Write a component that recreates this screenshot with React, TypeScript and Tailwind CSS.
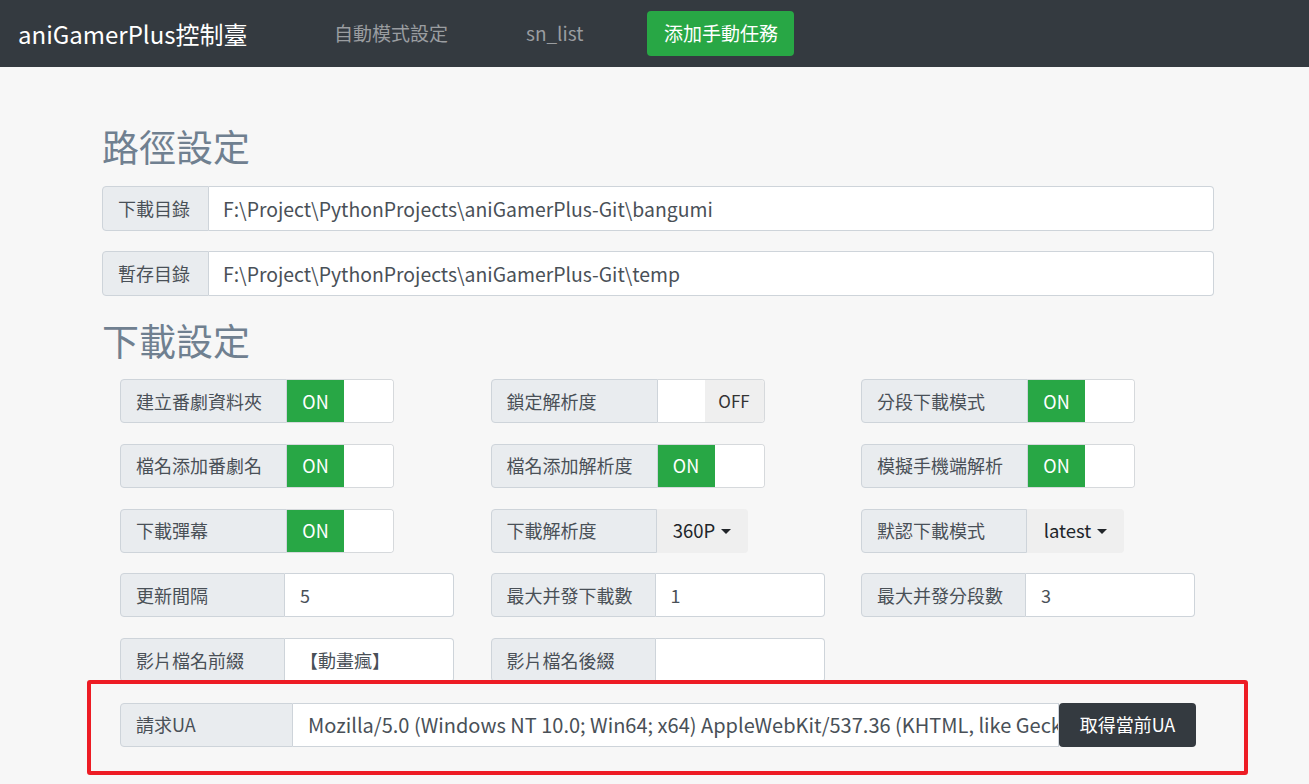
import React from "react";

const FONT = "font-['Noto_Sans_CJK_TC','Noto_Sans',sans-serif]";

function Label({ text, w }: { text: string; w: number }) {
  return (
    <div
      className="flex h-full items-center border border-[#ced4da] bg-[#e9ecef] pl-[15px] text-[18px] text-[#495057] rounded-l-[4px] shrink-0"
      style={{ width: w }}
    >
      {text}
    </div>
  );
}

function Toggle({ label, on }: { label: string; on: boolean }) {
  return (
    <div className="flex h-[44px] w-[274px]">
      <Label text={label} w={167} />
      <div className="flex h-full w-[107px] overflow-hidden border border-l-0 border-[#d6d9dc] rounded-r-[4px] bg-white">
        {on ? (
          <>
            <div className="flex w-[57px] items-center justify-center bg-[#28a745] text-[18px] text-white">ON</div>
            <div className="flex-1 bg-white" />
          </>
        ) : (
          <>
            <div className="w-[47px] bg-white" />
            <div className="flex flex-1 items-center justify-center bg-[#efefef] text-[17px] text-[#333]">OFF</div>
          </>
        )}
      </div>
    </div>
  );
}

function Dropdown({ label, value, w }: { label: string; value: string; w: number }) {
  return (
    <div className="flex h-[44px]">
      <Label text={label} w={166} />
      <div
        className="flex h-full items-center justify-center gap-[6px] bg-[#efefef] text-[18.5px] text-[#212529] rounded-r-[4px]"
        style={{ width: w }}
      >
        {value}
        <span className="mt-[1px] inline-block h-0 w-0 border-x-[5px] border-t-[5px] border-x-transparent border-t-[#212529]" />
      </div>
    </div>
  );
}

function TextField({ label, value }: { label: string; value: string }) {
  return (
    <div className="flex h-[44px] w-[334px]">
      <Label text={label} w={165} />
      <div className="flex h-full flex-1 items-center border border-l-0 border-[#ced4da] bg-white pl-[15px] text-[18px] text-[#495057] rounded-r-[4px]">
        {value}
      </div>
    </div>
  );
}

function PathField({ label, value }: { label: string; value: string }) {
  return (
    <div className="flex h-[45px] w-full">
      <Label text={label} w={107} />
      <div className="flex h-full flex-1 items-center border border-l-0 border-[#ced4da] bg-white pl-[14px] text-[19.4px] text-[#495057] rounded-r-[4px]">
        {value}
      </div>
    </div>
  );
}

export default function App() {
  return (
    <div className={`min-h-screen bg-[#f7f7f7] ${FONT}`}>
      <nav className="flex h-[67px] items-center bg-[#343a40] pl-[18px]">
        <span className="w-[230px] whitespace-nowrap text-[24px] text-white">aniGamerPlus控制臺</span>
        <span className="ml-[86px] text-[19px] text-[#9a9da0]">自動模式設定</span>
        <span className="ml-[78px] text-[19px] text-[#9a9da0]">sn_list</span>
        <button className="ml-[64px] h-[45px] w-[147px] rounded-[4px] bg-[#28a745] text-[19px] text-white">添加手動任務</button>
      </nav>

      <main className="relative mx-[102px] w-[1112px] pt-[57px]">
        <h2 className="mb-[18px] text-[37px] leading-[44px] text-[#708090]">路徑設定</h2>
        <div className="flex flex-col gap-[20px]">
          <PathField label="下載目錄" value="F:\Project\PythonProjects\aniGamerPlus-Git\bangumi" />
          <PathField label="暫存目錄" value="F:\Project\PythonProjects\aniGamerPlus-Git\temp" />
        </div>

        <h2 className="mb-[17px] mt-[22px] text-[37px] leading-[44px] text-[#708090]">下載設定</h2>

        <div className="grid grid-cols-[370.5px_370.5px_1fr] gap-y-[20.8px] pl-[18px]">
          <Toggle label="建立番劇資料夾" on />
          <Toggle label="鎖定解析度" on={false} />
          <Toggle label="分段下載模式" on />

          <Toggle label="檔名添加番劇名" on />
          <Toggle label="檔名添加解析度" on />
          <Toggle label="模擬手機端解析" on />

          <Toggle label="下載彈幕" on />
          <Dropdown label="下載解析度" value="360P" w={91} />
          <Dropdown label="默認下載模式" value="latest" w={97} />

          <TextField label="更新間隔" value="5" />
          <TextField label="最大并發下載數" value="1" />
          <TextField label="最大并發分段數" value="3" />

          <TextField label="影片檔名前綴" value="【動畫瘋】" />
          <TextField label="影片檔名後綴" value="" />
          <div />

          <div className="col-span-3 flex h-[44px] w-[1076px]">
            <Label text="請求UA" w={173} />
            <div className="flex h-full min-w-0 flex-1 items-center overflow-hidden whitespace-nowrap border border-l-0 border-[#ced4da] bg-white pl-[15px] text-[20px] text-[#495057]">
              <span className="overflow-hidden">Mozilla/5.0 (Windows NT 10.0; Win64; x64) AppleWebKit/537.36 (KHTML, like Gecko)</span>
            </div>
            <button className="h-full w-[137px] shrink-0 rounded-[4px] bg-[#343a40] text-[18px] text-white">取得當前UA</button>
          </div>
        </div>

        <div className="pointer-events-none absolute left-[-15px] top-[613px] h-[95px] w-[1161px] rounded-[3px] border-[4px] border-[#ed1c24]" />
      </main>
    </div>
  );
}
